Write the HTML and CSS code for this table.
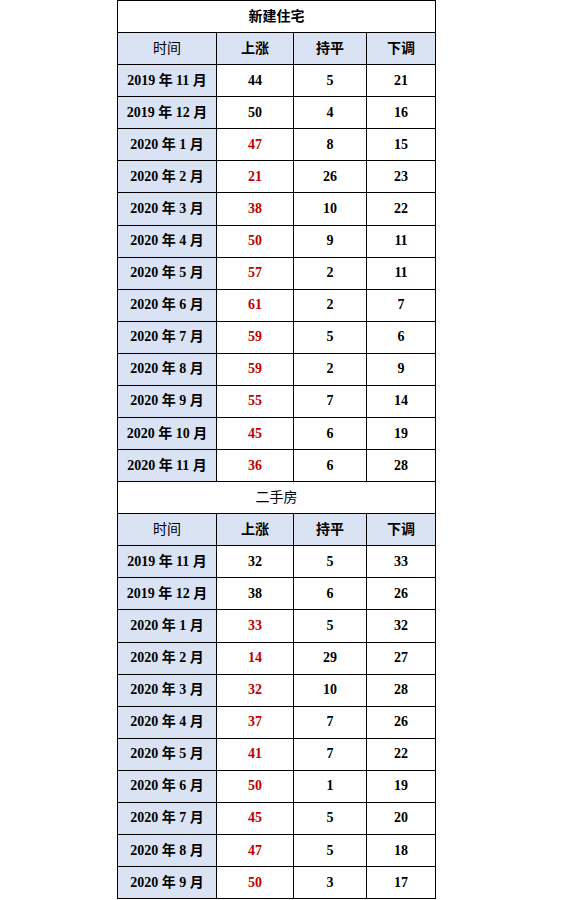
FILE: index.html
```html
<!DOCTYPE html>
<html lang="zh">
<head>
<meta charset="utf-8">
<link rel="stylesheet" href="styles.css">
</head>
<body>
<table class="tbl">
<colgroup><col class="c1"><col class="c2"><col class="c3"><col class="c4"></colgroup>
<tr><td colspan="4" class="title bold">新建住宅</td></tr>
<tr class="hd"><td>时间</td><td class="bold">上涨</td><td class="bold">持平</td><td class="bold">下调</td></tr>
<tr><td class="m">2019 年 11 月</td><td>44</td><td>5</td><td>21</td></tr>
<tr><td class="m">2019 年 12 月</td><td>50</td><td>4</td><td>16</td></tr>
<tr><td class="m">2020 年 1 月</td><td class="red">47</td><td>8</td><td>15</td></tr>
<tr><td class="m">2020 年 2 月</td><td class="red">21</td><td>26</td><td>23</td></tr>
<tr><td class="m">2020 年 3 月</td><td class="red">38</td><td>10</td><td>22</td></tr>
<tr><td class="m">2020 年 4 月</td><td class="red">50</td><td>9</td><td>11</td></tr>
<tr><td class="m">2020 年 5 月</td><td class="red">57</td><td>2</td><td>11</td></tr>
<tr><td class="m">2020 年 6 月</td><td class="red">61</td><td>2</td><td>7</td></tr>
<tr><td class="m">2020 年 7 月</td><td class="red">59</td><td>5</td><td>6</td></tr>
<tr><td class="m">2020 年 8 月</td><td class="red">59</td><td>2</td><td>9</td></tr>
<tr><td class="m">2020 年 9 月</td><td class="red">55</td><td>7</td><td>14</td></tr>
<tr><td class="m">2020 年 10 月</td><td class="red">45</td><td>6</td><td>19</td></tr>
<tr><td class="m">2020 年 11 月</td><td class="red">36</td><td>6</td><td>28</td></tr>
<tr><td colspan="4" class="title">二手房</td></tr>
<tr class="hd"><td>时间</td><td class="bold">上涨</td><td class="bold">持平</td><td class="bold">下调</td></tr>
<tr><td class="m">2019 年 11 月</td><td>32</td><td>5</td><td>33</td></tr>
<tr><td class="m">2019 年 12 月</td><td>38</td><td>6</td><td>26</td></tr>
<tr><td class="m">2020 年 1 月</td><td class="red">33</td><td>5</td><td>32</td></tr>
<tr><td class="m">2020 年 2 月</td><td class="red">14</td><td>29</td><td>27</td></tr>
<tr><td class="m">2020 年 3 月</td><td class="red">32</td><td>10</td><td>28</td></tr>
<tr><td class="m">2020 年 4 月</td><td class="red">37</td><td>7</td><td>26</td></tr>
<tr><td class="m">2020 年 5 月</td><td class="red">41</td><td>7</td><td>22</td></tr>
<tr><td class="m">2020 年 6 月</td><td class="red">50</td><td>1</td><td>19</td></tr>
<tr><td class="m">2020 年 7 月</td><td class="red">45</td><td>5</td><td>20</td></tr>
<tr><td class="m">2020 年 8 月</td><td class="red">47</td><td>5</td><td>18</td></tr>
<tr><td class="m">2020 年 9 月</td><td class="red">50</td><td>3</td><td>17</td></tr>
</table>
</body>
</html>
```
FILE: styles.css
```css
html, body {
  margin: 0;
  padding: 0;
  background: #ffffff;
}
.tbl {
  margin-left: 117px;
  border-collapse: collapse;
  table-layout: fixed;
  width: 318px;
  font-family: "Liberation Serif", "Noto Sans CJK SC", serif;
  font-size: 14px;
  color: #000000;
}
.c1 { width: 99px; }
.c2 { width: 77px; }
.c3 { width: 73px; }
.c4 { width: 69px; }
.tbl td {
  border: 1px solid #000000;
  height: 31.08px;
  padding: 0;
  text-align: center;
  vertical-align: middle;
  font-weight: bold;
  line-height: 16px;
}
.tbl td.title { font-weight: normal; }
.tbl td.title.bold { font-weight: bold; }
.tbl .hd td { background: #dae3f3; }
.tbl .hd td:first-child { font-weight: normal; }
.tbl td.m { background: #dae3f3; }
.tbl td.red { color: #c00000; }
```
